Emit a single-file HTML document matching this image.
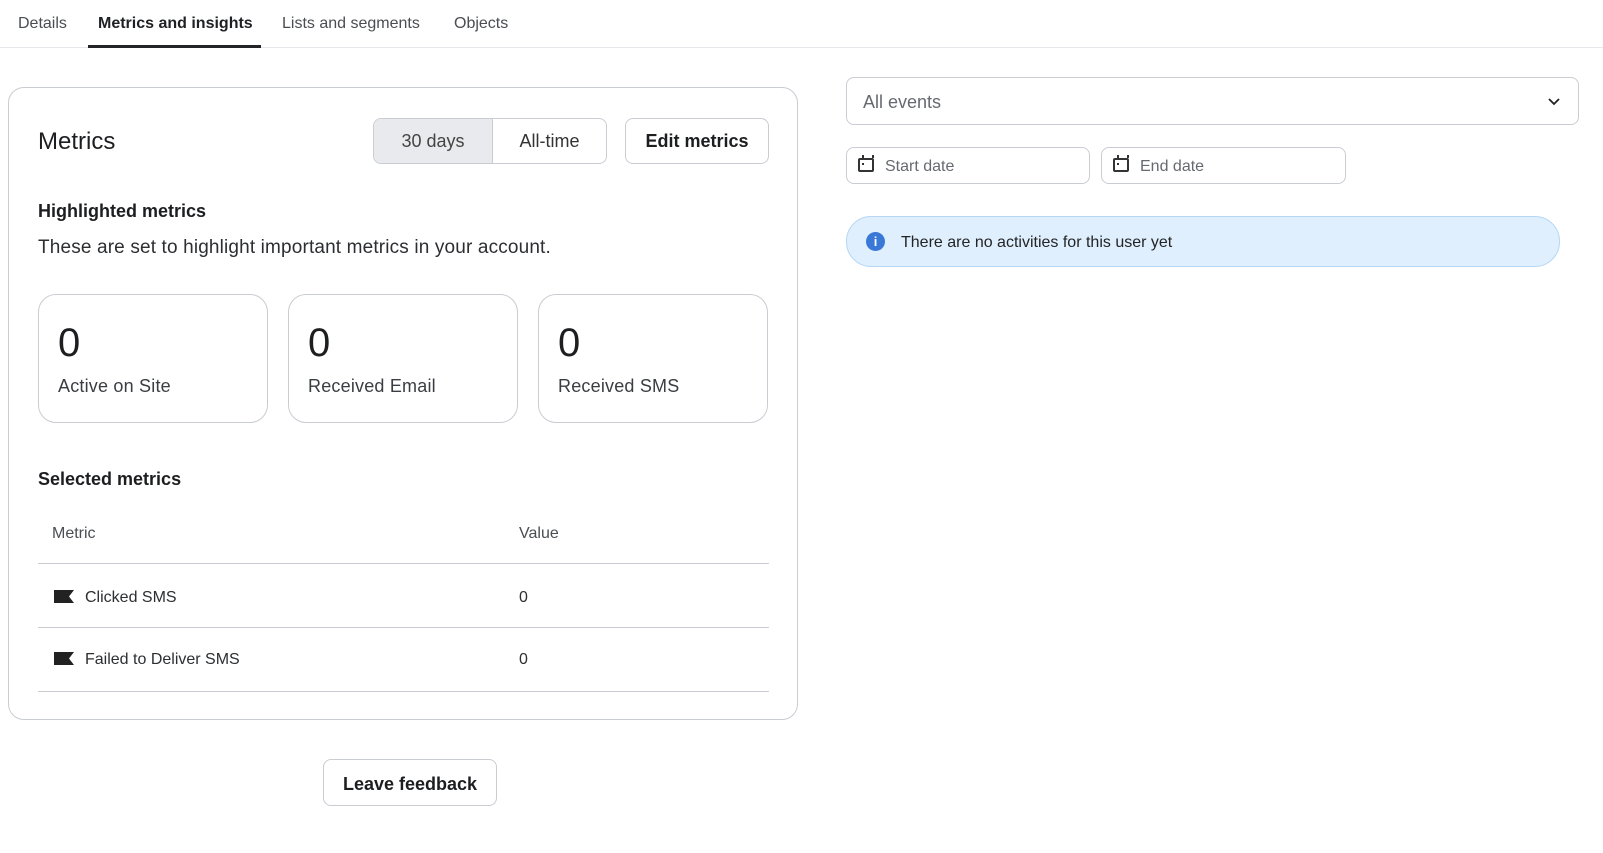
<!DOCTYPE html>
<html><head><meta charset="utf-8"><style>
*{box-sizing:border-box;margin:0;padding:0}
body{width:1603px;height:853px;background:#fff;font-family:"Liberation Sans",sans-serif;color:#232426;position:relative;overflow:hidden}
.a{position:absolute}
.tab{position:absolute;top:15px;font-size:16px;color:#4a4d52}
.btn{position:absolute;border:1px solid #c9ccd1;border-radius:8px;background:#fff;display:flex;align-items:center;justify-content:center}
.stat{position:absolute;top:294px;width:230px;height:129px;border:1px solid #c9ccd1;border-radius:18px}
.stat .n{position:absolute;left:19px;top:26px;font-size:40px;color:#1d1e20}
.stat .l{position:absolute;left:19px;top:81px;font-size:18px;color:#3a3d42;letter-spacing:0.2px}
.line{position:absolute;left:38px;width:731px;height:1px;background:#c9ccd1}
.row{position:absolute;font-size:16px;color:#2c2e31}
.flag{position:absolute;left:54px;width:20px;height:13px;background:#222;clip-path:polygon(0 0,100% 0,75% 50%,100% 100%,0 100%)}
.inp{position:absolute;top:147px;height:37px;border:1px solid #c9ccd1;border-radius:8px;font-size:16px;color:#666a70;padding-left:38px;line-height:37px}
.cal{position:absolute;left:11px;top:10px;width:16px;height:14px;border:2px solid #333;border-radius:2px}
.cal:before{content:"";position:absolute;left:2px;top:-5px;width:8px;height:3px;border-left:2px solid #333;border-right:2px solid #333}
.cal:after{content:"";position:absolute;left:2px;top:3px;width:2px;height:2px;background:#333}
</style></head><body>
<div class="tab" style="left:18px">Details</div>
<div class="tab" style="left:98px;color:#1f2023;font-weight:bold">Metrics and insights</div>
<div class="tab" style="left:282px">Lists and segments</div>
<div class="tab" style="left:454px">Objects</div>
<div class="a" style="left:0;top:47px;width:1603px;height:1px;background:#e6e8eb"></div>
<div class="a" style="left:88px;top:45px;width:173px;height:3px;background:#232426"></div>

<div class="a" style="left:8px;top:87px;width:790px;height:633px;border:1px solid #c9ccd1;border-radius:16px"></div>
<div class="a" style="left:38px;top:128px;font-size:24px;color:#1d1e20">Metrics</div>
<div class="btn" style="left:373px;top:118px;width:234px;height:46px;overflow:hidden;justify-content:flex-start">
 <div style="width:119px;height:100%;background:#e8eaed;display:flex;align-items:center;justify-content:center;font-size:18px;color:#444;border-right:1px solid #c9ccd1">30 days</div>
 <div style="flex:1;display:flex;align-items:center;justify-content:center;font-size:18px;color:#333">All-time</div>
</div>
<div class="btn" style="left:625px;top:118px;width:144px;height:46px;font-size:18px;font-weight:bold;color:#1d1e20">Edit metrics</div>
<div class="a" style="left:38px;top:201px;font-size:18px;font-weight:bold;color:#1d1e20">Highlighted metrics</div>
<div class="a" style="left:38px;top:237px;font-size:19px;letter-spacing:0.15px;color:#2c2e31">These are set to highlight important metrics in your account.</div>

<div class="stat" style="left:38px"><div class="n">0</div><div class="l">Active on Site</div></div>
<div class="stat" style="left:288px"><div class="n">0</div><div class="l">Received Email</div></div>
<div class="stat" style="left:538px"><div class="n">0</div><div class="l">Received SMS</div></div>

<div class="a" style="left:38px;top:469px;font-size:18px;font-weight:bold;color:#1d1e20">Selected metrics</div>
<div class="row" style="left:52px;top:525px;color:#4a4d52">Metric</div>
<div class="row" style="left:519px;top:525px;color:#4a4d52">Value</div>
<div class="line" style="top:563px"></div>
<div class="flag" style="top:590px"></div>
<div class="row" style="left:85px;top:589px">Clicked SMS</div>
<div class="row" style="left:519px;top:589px">0</div>
<div class="line" style="top:627px"></div>
<div class="flag" style="top:652px"></div>
<div class="row" style="left:85px;top:651px">Failed to Deliver SMS</div>
<div class="row" style="left:519px;top:651px">0</div>
<div class="line" style="top:691px"></div>

<div class="btn" style="left:323px;top:759px;width:174px;height:47px;font-size:18px;font-weight:bold;color:#1d1e20;padding-top:3px">Leave feedback</div>

<div class="a" style="left:846px;top:77px;width:733px;height:48px;border:1px solid #c9ccd1;border-radius:8px;font-size:18px;color:#666a70;padding-left:16px;line-height:49px">All events
 <svg class="a" style="left:700px;top:18px" width="14" height="12" viewBox="0 0 14 12"><path d="M2 3l5 5 5-5" fill="none" stroke="#222" stroke-width="1.8"/></svg></div>
<div class="inp" style="left:846px;width:244px"><div class="cal"></div>Start date</div>
<div class="inp" style="left:1101px;width:245px"><div class="cal"></div>End date</div>
<div class="a" style="left:846px;top:216px;width:714px;height:51px;background:#dfeffd;border:1px solid #b5d6f5;border-radius:25px">
 <div class="a" style="left:19px;top:15px;width:19px;height:19px;border-radius:50%;background:#3a78d8;color:#fff;font-size:13px;font-weight:bold;text-align:center;line-height:19px">i</div>
 <div class="a" style="left:54px;top:17px;font-size:16px;color:#232426">There are no activities for this user yet</div>
</div>
</body></html>
